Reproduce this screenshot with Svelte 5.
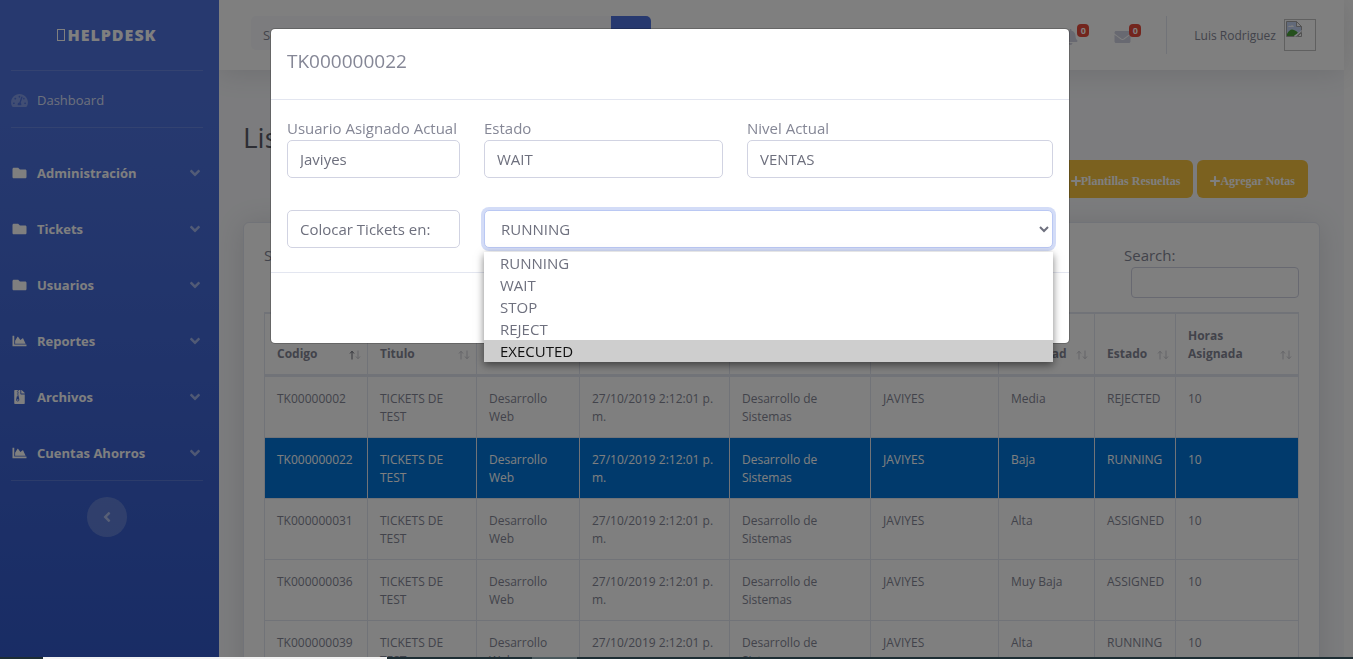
<script>
  const icons = {
    gauge: { w: 576, d: 'M288 32C128.94 32 0 160.94 0 320c0 52.8 14.25 102.26 39.06 144.8 5.61 9.62 16.3 15.2 27.44 15.2h443c11.14 0 21.83-5.58 27.44-15.2C561.75 422.26 576 372.8 576 320c0-159.06-128.94-288-288-288zm0 64c14.71 0 26.58 10.13 30.32 23.65-1.11 2.26-2.64 4.23-3.45 6.67l-9.22 27.67c-5.13 3.49-10.97 6.01-17.64 6.01-17.67 0-32-14.33-32-32S270.33 96 288 96zM96 384c-17.67 0-32-14.33-32-32s14.33-32 32-32 32 14.33 32 32-14.33 32-32 32zm48-160c-17.67 0-32-14.33-32-32s14.33-32 32-32 32 14.33 32 32-14.33 32-32 32zm246.77-72.41l-61.33 184C343.13 347.33 352 364.54 352 384c0 11.72-3.38 22.55-8.88 32H232.88c-5.5-9.45-8.88-20.28-8.88-32 0-33.94 26.5-61.43 59.9-63.59l61.34-184.01c4.17-12.56 17.73-19.45 30.36-15.17 12.57 4.19 19.35 17.79 15.17 30.36zm14.66 57.2l15.52-46.55c3.47-1.29 7.13-2.23 11.05-2.23 17.67 0 32 14.33 32 32s-14.33 32-32 32c-11.38-.01-20.89-6.28-26.57-15.22zM480 384c-17.67 0-32-14.33-32-32s14.33-32 32-32 32 14.33 32 32-14.33 32-32 32z' },
    folder: { w: 512, d: 'M464 128H272l-64-64H48C21.49 64 0 85.49 0 112v288c0 26.51 21.49 48 48 48h416c26.51 0 48-21.49 48-48V176c0-26.51-21.49-48-48-48z' },
    chart: { w: 512, d: 'M500 384c6.6 0 12 5.4 12 12v40c0 6.6-5.4 12-12 12H12c-6.6 0-12-5.4-12-12V76c0-6.6 5.4-12 12-12h40c6.6 0 12 5.4 12 12v308h436zM372.7 159.5L288 216l-85.3-113.7c-5.1-6.8-15.5-6.3-19.9 1L96 248v104h384l-89.9-187.8c-3.2-6.5-11.4-8.7-17.4-4.7z' },
    archive: { w: 384, d: 'M377 105L279.1 7c-4.5-4.5-10.6-7-17-7H256v128h128v-6.1c0-6.3-2.5-12.4-7-16.9zM224 136V0h-64v32h-32V0H24C10.700 0 0 10.700 0 24v464c0 13.300 10.700 24 24 24h336c13.300 0 24-10.700 24-24V160H248c-13.200 0-24-10.800-24-24zM96 32h32v32h-32zM128 64h32v32h-32zM96 96h32v32h-32zM128 128h32v32h-32zM96 160h32v32h-32zM128 192h32v32h-32zM96 224h64l24 110c8 46-20 82-56 82s-64-36-55-82zM128 336c-18 0-32 12-32 27s14 27 32 27 32-12 32-27-14-27-32-27z' },
    bell: { w: 448, d: 'M224 512c35.32 0 63.97-28.65 63.97-64H160.03c0 35.35 28.65 64 63.97 64zm215.39-149.71c-19.32-20.76-55.47-51.99-55.47-154.29 0-77.7-54.48-139.9-127.94-155.16V32c0-17.67-14.32-32-31.98-32s-31.98 14.33-31.98 32v20.84C118.56 68.1 64.08 130.3 64.08 208c0 102.3-36.15 133.53-55.47 154.29-6 6.45-8.66 14.16-8.61 21.71.11 16.4 12.98 32 32.1 32h383.8c19.12 0 32-15.6 32.1-32 .05-7.55-2.61-15.27-8.61-21.71z' },
    envelope: { w: 512, d: 'M502.3 190.8c3.9-3.1 9.7-.2 9.7 4.7V400c0 26.5-21.5 48-48 48H48c-26.5 0-48-21.5-48-48V195.6c0-5 5.7-7.8 9.7-4.7 22.4 17.4 52.1 39.5 154.1 113.6 21.1 15.4 56.7 47.8 92.2 47.6 35.7.3 72-32.8 92.3-47.6 102-74.1 131.6-96.3 154-113.7zM256 320c23.2.4 56.6-29.2 73.4-41.4 132.7-96.3 142.8-104.7 173.4-128.7 5.8-4.5 9.2-11.5 9.2-18.9v-19c0-26.5-21.5-48-48-48H48c-26.5 0-48 21.5-48 48v19c0 7.4 3.4 14.3 9.2 18.9 30.6 23.9 40.7 32.4 173.4 128.7 16.8 12.2 50.2 41.8 73.4 41.4z' },
    down: { w: 320, d: 'M143 352.3L7 216.3c-9.4-9.4-9.4-24.6 0-33.9l22.6-22.6c9.4-9.4 24.6-9.4 33.9 0l96.4 96.4 96.4-96.4c9.4-9.4 24.6-9.4 33.9 0l22.6 22.6c9.4 9.4 9.4 24.6 0 33.9l-136 136c-9.2 9.4-24.4 9.4-33.8 0z' },
    plus: { w: 448, d: 'M416 208H272V64c0-17.67-14.33-32-32-32h-32c-17.67 0-32 14.33-32 32v144H32c-17.67 0-32 14.33-32 32v32c0 17.67 14.33 32 32 32h144v144c0 17.67 14.33 32 32 32h32c17.67 0 32-14.33 32-32V304h144c17.67 0 32-14.33 32-32v-32c0-17.67-14.33-32-32-32z' },
    search: { w: 512, d: 'M505 442.700L405.300 343c-4.500-4.500-10.600-7-17-7H372c27.600-35.300 44-79.700 44-128C416 93.100 322.900 0 208 0S0 93.100 0 208s93.100 208 208 208c48.300 0 92.700-16.400 128-44v16.300c0 6.400 2.500 12.500 7 17l99.700 99.700c9.400 9.400 24.600 9.400 33.900 0l28.300-28.300c9.400-9.400 9.400-24.600.1-34zM208 336c-70.700 0-128-57.200-128-128 0-70.700 57.200-128 128-128 70.700 0 128 57.200 128 128 0 70.700-57.200 128-128 128z' }
  };

  const menu = [
    { icon: 'folder', label: 'Administración' },
    { icon: 'folder', label: 'Tickets' },
    { icon: 'folder', label: 'Usuarios' },
    { icon: 'chart', label: 'Reportes' },
    { icon: 'archive', label: 'Archivos' },
    { icon: 'chart', label: 'Cuentas Ahorros' }
  ];

  const columns = [
    { label: 'Codigo', width: 103 },
    { label: 'Titulo', width: 109 },
    { label: 'Categoria', width: 103 },
    { label: 'Fecha', width: 150 },
    { label: 'Departamento', width: 141 },
    { label: 'Asignado', width: 128 },
    { label: 'Prioridad', width: 96 },
    { label: 'Estado', width: 81 },
    { label: 'Horas Asignada', width: 123 }
  ];

  const tickets = [
    { code: 'TK00000002', priority: 'Media', state: 'REJECTED' },
    { code: 'TK000000022', priority: 'Baja', state: 'RUNNING' },
    { code: 'TK000000031', priority: 'Alta', state: 'ASSIGNED' },
    { code: 'TK000000036', priority: 'Muy Baja', state: 'ASSIGNED' },
    { code: 'TK000000039', priority: 'Alta', state: 'RUNNING' }
  ];

  const options = ['RUNNING', 'WAIT', 'STOP', 'REJECT', 'EXECUTED'];
  let selectedCode = $state('TK000000022');
  let target = $state('RUNNING');
  let highlighted = $state('EXECUTED');
  let user = $state('Javiyes');
  let current = $state('WAIT');
  let level = $state('VENTAS');
  let caption = $state('Colocar Tickets en:');
</script>

{#snippet icon(name)}
  <svg class="icon {name}" viewBox="0 0 {icons[name].w} 512" fill="currentColor" fill-rule="evenodd" aria-hidden="true"><path d={icons[name].d} /></svg>
{/snippet}

<div class="page">
  <nav class="sidebar">
    <a class="brand" href="#home"><span class="mark"></span>HELPDESK</a>
    <hr />
    <a class="dashboard" href="#dashboard">{@render icon('gauge')}<span>Dashboard</span></a>
    <hr />
    <ul class="menu">
      {#each menu as item}
        <li>
          <a href="#menu"><span class="slot">{@render icon(item.icon)}</span><span class="name">{item.label}</span>{@render icon('down')}</a>
        </li>
      {/each}
    </ul>
    <hr />
    <button class="collapse" aria-label="Contraer menú">{@render icon('down')}</button>
  </nav>

  <div class="main">
    <header class="topbar">
      <form class="search">
        <input type="text" placeholder="Search for..." aria-label="Search for" />
        <button type="button" aria-label="Buscar">{@render icon('search')}</button>
      </form>
      <div class="tools">
        <a class="alert" href="#alerts" aria-label="Alertas">{@render icon('bell')}<span class="badge">0</span></a>
        <a class="alert" href="#messages" aria-label="Mensajes">{@render icon('envelope')}<span class="badge">0</span></a>
        <span class="rule"></span>
        <a class="profile" href="#profile">
          <span>Luis Rodriguez</span>
          <svg class="avatar" viewBox="0 0 32 32" aria-hidden="true">
            <rect x=".5" y=".5" width="31" height="31" fill="none" stroke="#c0c0c0" />
            <path d="M2.500 2.500h10l5 5v5l-5 5h-10z" fill="#c5d5f4" stroke="#a5a5a5" />
            <path d="M12.500 2.500v5h5z" fill="#fff" stroke="#a5a5a5" />
            <path d="M4 8q1-2 2.500-1Q9 5 10 8z" fill="#fff" />
            <path d="M3 17v-2q3-6 7-4 3 1 4 3l-4 3z" fill="#4aa13b" />
            <path d="M11 18l7-6v-1l-8 6z" fill="#fff" />
            <path d="M13.500 17.500l4-4v4z" fill="#fff" stroke="#a5a5a5" />
          </svg>
        </a>
      </div>
    </header>

    <main class="content">
      <h1>Lista de Tickets</h1>
      <div class="actions">
        <button>{@render icon('plus')}Plantillas Resueltas</button>
        <button>{@render icon('plus')}Agregar Notas</button>
      </div>
      <section class="card">
        <div class="filters">
          <span>Show</span>
          <label><span>Search:</span><input type="search" /></label>
        </div>
        <table>
          <colgroup>
            {#each columns as column}<col style="width: {column.width}px" />{/each}
          </colgroup>
          <thead>
            <tr>
              {#each columns as column, i}
                <th scope="col">
                  <div class="head">
                    <span>{column.label}</span>
                    <svg class="sort" class:sorted={i === 0} viewBox="0 0 12 10" aria-hidden="true">
                      <path class="up" d="M3 9.500V1.500M1 3.500L3 1.200 5 3.500" />
                      <path d="M9 .5V8.500M7 6.500L9 8.800 11 6.500" />
                    </svg>
                  </div>
                </th>
              {/each}
            </tr>
          </thead>
          <tbody>
            {#each tickets as ticket}
              <tr class:selected={ticket.code === selectedCode} onclick={() => (selectedCode = ticket.code)}>
                <td>{ticket.code}</td>
                <td>TICKETS DE TEST</td>
                <td>Desarrollo Web</td>
                <td>27/10/2019 2:12:01 p. m.</td>
                <td>Desarrollo de Sistemas</td>
                <td>JAVIYES</td>
                <td>{ticket.priority}</td>
                <td>{ticket.state}</td>
                <td>10</td>
              </tr>
            {/each}
          </tbody>
        </table>
      </section>
    </main>
  </div>
</div>

<div class="backdrop">
  <div class="modal" role="dialog" aria-labelledby="modal-title">
    <div class="modal-header"><h2 id="modal-title">TK000000022</h2></div>
    <div class="modal-body">
      <div class="field"><label for="user">Usuario Asignado Actual</label><input id="user" type="text" bind:value={user} /></div>
      <div class="field"><label for="current">Estado</label><input id="current" type="text" bind:value={current} /></div>
      <div class="field"><label for="level">Nivel Actual</label><input id="level" type="text" bind:value={level} /></div>
      <div class="field"><input type="text" aria-label="Acción" bind:value={caption} /></div>
      <div class="field picker">
        <select aria-label="Colocar Tickets en" bind:value={target}>
          {#each options as option}<option>{option}</option>{/each}
        </select>
        <ul class="options">
          {#each options as option}
            <li class:active={option === highlighted} onmouseenter={() => (highlighted = option)}>{option}</li>
          {/each}
        </ul>
      </div>
    </div>
    <div class="modal-footer"></div>
  </div>
</div>

<div class="taskbar"><span class="light"></span><span class="dim"></span></div>

<style>
  :global(body) {
    margin: 0;
    overflow: hidden;
    background: #fff;
    color: #858796;
    font: 15px/24px 'Open Sans', 'Noto Sans', sans-serif;
  }
  * { box-sizing: border-box; }
  a { color: inherit; text-decoration: none; }
  button, input, select { font: inherit; color: inherit; margin: 0; }
  button { border: 0; padding: 0; }
  ul { list-style: none; margin: 0; padding: 0; }
  .icon { height: 14px; flex: none; display: block; }

  .page { display: flex; height: 100vh; overflow: hidden; padding-right: 9px; }

  .sidebar {
    flex: none;
    width: 219px;
    position: relative;
    z-index: 1;
    display: flex;
    flex-direction: column;
    padding: 0 16px 0 11px;
    background: linear-gradient(180deg, #4e73df 15%, #3259ca 100%);
    color: #fff;
    font-size: 13px;
  }
  .sidebar hr { width: 100%; height: 1px; border: 0; margin: 0; background: rgba(255, 255, 255, 0.15); }
  .brand {
    height: 70px;
    display: flex;
    align-items: center;
    justify-content: center;
    gap: 2px;
    font-size: 16px;
    font-weight: 800;
    letter-spacing: 1px;
  }
  .mark { width: 8px; height: 12px; border: 1px solid #fff; }
  .dashboard { height: 56px; display: flex; align-items: center; gap: 9px; padding-top: 2px; color: rgba(255, 255, 255, 0.8); font-size: 13px; }
  .dashboard :global(.icon) { width: 17px; height: 15px; color: rgba(255, 255, 255, 0.3); }
  .menu { padding: 17px 0 0; }
  .menu a { height: 56px; display: flex; align-items: center; font-weight: 700; }
  .menu .slot { width: 26px; padding-left: 1px; display: flex; }
  .menu .slot .icon { width: 15px; }
  .menu .name { flex: 1; }
  .menu li:last-child a { height: 55px; }
  .down { height: 16px; width: 10px; color: rgba(255, 255, 255, 0.5); margin-right: 3px; }
  .collapse {
    width: 40px;
    height: 40px;
    border-radius: 50%;
    background: rgba(255, 255, 255, 0.2);
    align-self: center;
    margin-top: 16px;
    display: grid;
    place-items: center;
  }
  .collapse .down { transform: rotate(90deg); margin: 0; }

  .main { flex: 1; min-width: 0; background: #f8f9fc; }
  .topbar {
    height: 70px;
    display: flex;
    align-items: center;
    justify-content: space-between;
    padding: 0 28px 0 32px;
    background: #fff;
    box-shadow: 0 2px 28px rgba(58, 59, 69, 0.15);
  }
  .search { display: flex; flex: 0 1 400px; height: 38px; align-self: flex-start; margin-top: 16px; }
  .search input { flex: 1; min-width: 0; height: 34px; padding: 4px 12px 0; border: 0; border-radius: 5px 0 0 5px; background: #f8f9fc; font-size: 13px; }
  .search input::placeholder { color: #858796; }
  .search button { width: 40px; border-radius: 0 5px 5px 0; background: #4e73df; color: #fff; display: grid; place-items: center; }
  .tools { display: flex; align-items: center; color: #d1d3e2; font-size: 12px; }
  .alert { display: flex; align-items: flex-start; width: 52px; }
  .alert .icon { width: 17px; height: 16px; margin-top: 4px; }
  .badge { background: #e74a3b; color: #fff; border-radius: 4px; font-size: 9px; line-height: 13px; height: 13px; width: 12px; margin: -1px 0 0 -2px; text-align: center; font-weight: 700; }
  .rule { width: 1px; height: 38px; background: #e3e6f0; margin-right: 27px; }
  .profile { display: flex; align-items: center; gap: 8px; color: #858796; }
  .profile span { padding-top: 2px; }
  .avatar { width: 32px; height: 32px; }

  .content { padding: 0 24px; }
  h1 { margin: 0; padding-top: 49px; font-size: 28px; line-height: 36px; font-weight: 400; color: #5a5c69; }
  .actions { display: flex; justify-content: flex-end; gap: 4px; padding: 5px 12px 24px; }
  .actions button {
    display: flex;
    align-items: center;
    height: 38px;
    padding: 4px 13px 0;
    border-radius: 6px;
    background: #f6c23e;
    color: #fff;
    font: 700 12px/20px 'Liberation Serif', serif;
  }
  .plus { width: 10px; height: 12px; }
  .card { background: #fff; border: 1px solid #e3e6f0; border-radius: 6px; padding: 20px; box-shadow: 0 2px 28px rgba(58, 59, 69, 0.15); }
  .filters { display: flex; justify-content: space-between; height: 69px; }
  .filters label { width: 175px; display: flex; flex-direction: column; align-items: flex-end; }
  .filters label span { align-self: flex-start; }
  .filters input { width: 168px; height: 31px; border: 1px solid #d1d3e2; border-radius: 4px; background: #fff; }
  table { width: 100%; table-layout: fixed; border-collapse: separate; border-spacing: 0; border-left: 1px solid #e3e6f0; border-top: 2px solid #e3e6f0; font-size: 12px; line-height: 18px; }
  th, td { padding: 13px 12px 11px; text-align: left; border-right: 1px solid #e3e6f0; border-bottom: 1px solid #e3e6f0; vertical-align: top; }
  th { vertical-align: bottom; padding-right: 6px; border-bottom-width: 3px; }
  td:nth-child(8), td:first-child { padding-right: 0; }
  .head { display: flex; justify-content: space-between; align-items: flex-end; height: 36px; }
  .sort { flex: none; width: 12px; height: 10px; margin-bottom: 3px; fill: none; stroke: #c9cad1; stroke-width: 1; }
  .sorted .up { stroke: #6a6c78; }
  .selected td { background: #0275d8; color: #fff; }

  .backdrop { position: fixed; inset: 0; z-index: 2; background: rgba(0, 0, 0, 0.5); padding: 28px 13px 0 0; }
  .modal { max-width: 800px; margin: 0 auto; background: #fff; background-clip: padding-box; border: 1px solid rgba(0, 0, 0, 0.2); border-radius: 5px; }
  .modal-header { height: 71px; padding: 16px; border-bottom: 1px solid #e3e6f0; }
  h2 { margin: 0; font-size: 19px; line-height: 32px; font-weight: 400; }
  .modal-body { display: grid; grid-template-columns: 173px 239fr 306fr; gap: 32px 24px; padding: 16px 16px 24px; border-bottom: 1px solid #e3e6f0; }
  .modal-footer { height: 70px; }
  .field { display: flex; flex-direction: column; min-width: 0; }
  .field label { white-space: nowrap; }
  .field input, .field select { width: 100%; height: 38px; border: 1px solid #d1d3e2; border-radius: 5px; padding: 6px 12px; background: #fff; color: #6e707e; }
  .picker { position: relative; grid-column: span 2; }
  .field select { border-color: #bac8f3; outline: 0; box-shadow: 0 0 0 3px rgba(78, 115, 223, 0.25); }
  .options { position: absolute; top: 42px; left: 0; right: 0; background: #fff; color: #6e707e; box-shadow: 0 3px 8px rgba(0, 0, 0, 0.5); }
  .options li { padding: 0 16px; line-height: 22px; }
  .options .active { background: #cecece; color: #101010; }

  .taskbar { position: fixed; left: 0; right: 0; bottom: 0; z-index: 3; height: 2px; display: flex; padding-left: 43px; background: #1d2d33; }
  .light { width: 344px; background: #f2f2f2; }
  .dim { width: 45px; margin-left: 145px; background: #4a585c; }
</style>
